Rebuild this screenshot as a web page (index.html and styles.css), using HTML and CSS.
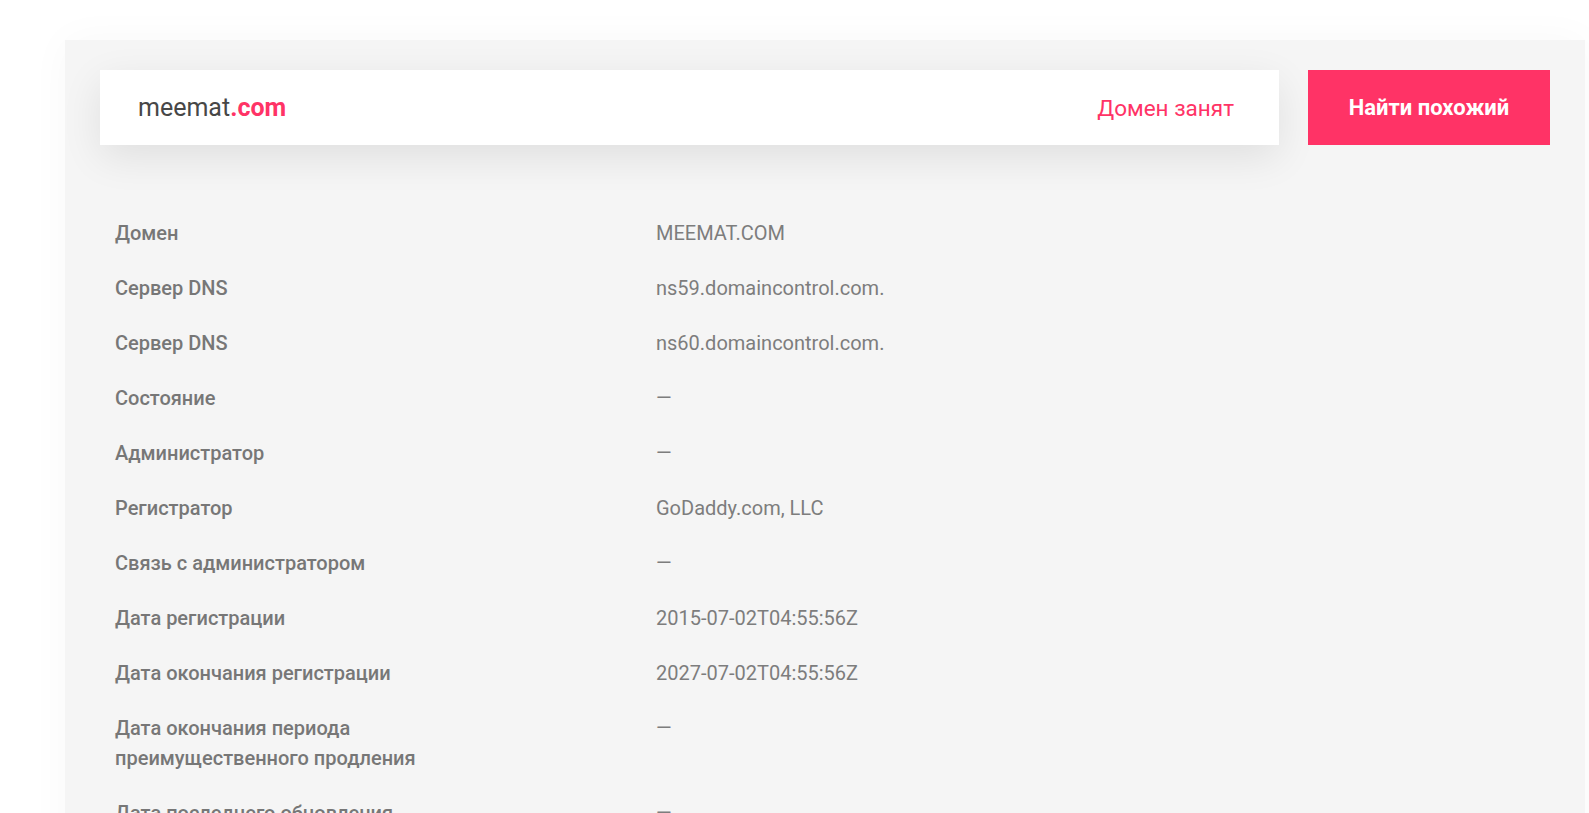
FILE: index.html
```html
<!DOCTYPE html>
<html lang="ru">
<head>
<meta charset="utf-8">
<title>meemat.com — WHOIS</title>
<link rel="stylesheet" href="styles.css">
</head>
<body>
<main class="panel">
  <div class="search">
    <div class="search-card">
      <span class="domain">meemat<b class="tld">.com</b></span>
      <span class="status">Домен занят</span>
    </div>
    <button class="find-btn" type="button">Найти похожий</button>
  </div>

  <dl class="whois">
    <div class="row"><dt>Домен</dt><dd>MEEMAT.COM</dd></div>
    <div class="row"><dt>Сервер DNS</dt><dd>ns59.domaincontrol.com.</dd></div>
    <div class="row"><dt>Сервер DNS</dt><dd>ns60.domaincontrol.com.</dd></div>
    <div class="row"><dt>Состояние</dt><dd>—</dd></div>
    <div class="row"><dt>Администратор</dt><dd>—</dd></div>
    <div class="row"><dt>Регистратор</dt><dd>GoDaddy.com, LLC</dd></div>
    <div class="row"><dt>Связь с администратором</dt><dd>—</dd></div>
    <div class="row"><dt>Дата регистрации</dt><dd>2015-07-02T04:55:56Z</dd></div>
    <div class="row"><dt>Дата окончания регистрации</dt><dd>2027-07-02T04:55:56Z</dd></div>
    <div class="row"><dt>Дата окончания периода преимущественного продления</dt><dd>—</dd></div>
    <div class="row"><dt>Дата последнего обновления</dt><dd>—</dd></div>
  </dl>
</main>
</body>
</html>
```

FILE: styles.css
```css
html, body {
  margin: 0;
  padding: 0;
  background: #ffffff;
}

body {
  font-family: Roboto, "Noto Sans", "Liberation Sans", sans-serif;
  color: #777777;
  overflow: hidden;
  height: 813px;
}

/* grey content panel */
.panel {
  margin: 40px 0 0 65px;
  width: 1520px;
  min-height: 900px;
  box-sizing: border-box;
  padding: 30px 0 0 35px;
  background: #f5f5f5;
  box-shadow: 0 0 40px rgba(0, 0, 0, 0.03);
}

/* search bar */
.search {
  display: flex;
  gap: 29px;
  height: 75px;
}

.search-card {
  width: 1179px;
  box-sizing: border-box;
  display: flex;
  align-items: center;
  justify-content: space-between;
  padding: 0 45px 0 38px;
  background: #ffffff;
  box-shadow: 0 12px 40px rgba(0, 0, 0, 0.09);
}

.domain {
  font-size: 25px;
  color: #474747;
}

.tld {
  font-weight: 700;
  color: #ff3366;
}

.status {
  font-size: 22.5px;
  color: #ff3366;
}

.find-btn {
  width: 242px;
  height: 75px;
  border: 0;
  padding: 0;
  background: #ff3366;
  color: #ffffff;
  font-family: inherit;
  font-size: 22px;
  font-weight: 700;
  cursor: pointer;
}

/* whois details */
.whois {
  margin: 61px 0 0 15px;
  padding: 0;
}

.row {
  display: flex;
  padding: 12px 0 13px;
  line-height: 30px;
  font-size: 20px;
}

.row dt {
  width: 541px;
  flex: none;
  box-sizing: border-box;
  padding-right: 200px;
  font-weight: 500;
  color: #777777;
}

.row dd {
  margin: 0;
  color: #7d7d7d;
}
```
